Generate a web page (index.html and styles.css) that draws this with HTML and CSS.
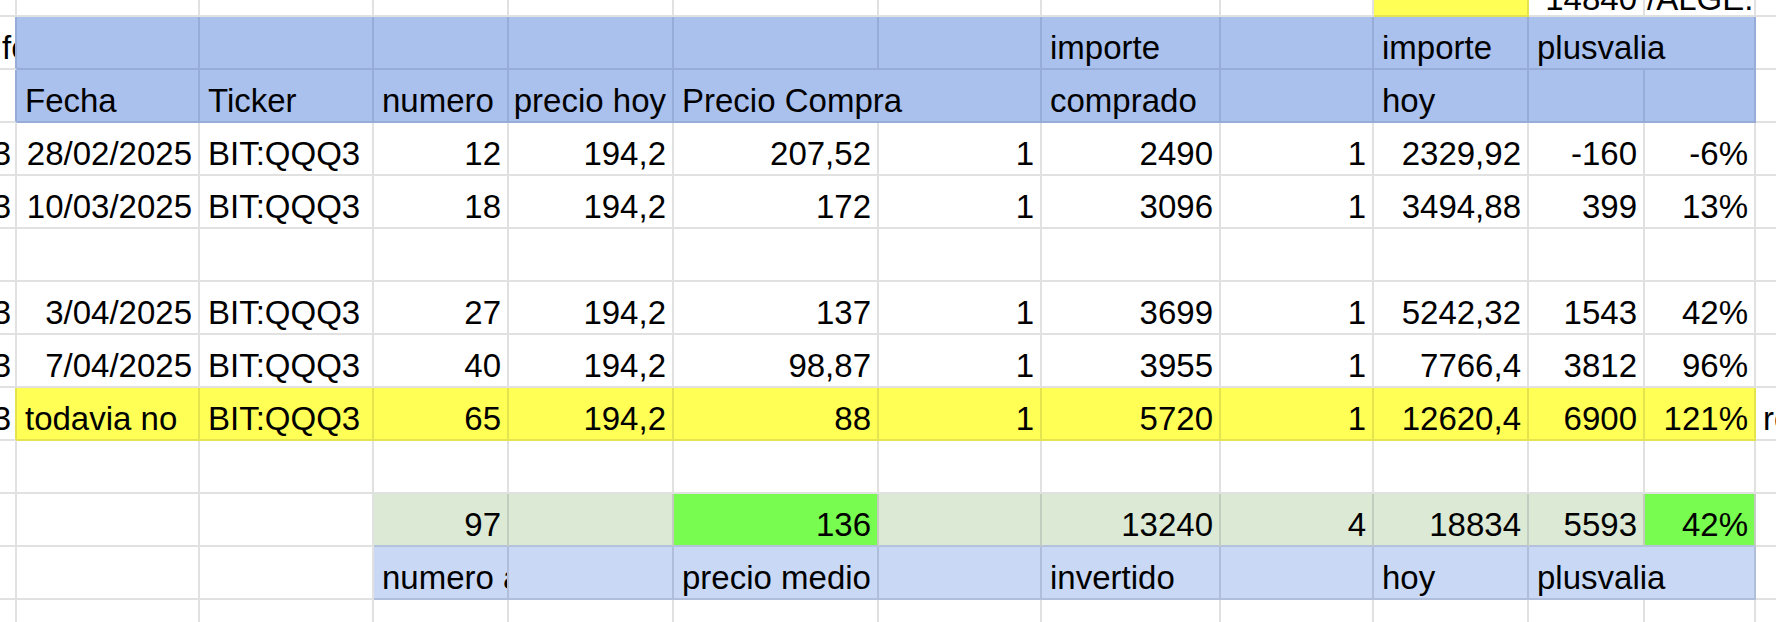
FILE: index.html
```html
<!DOCTYPE html>
<html lang="es">
<head>
<meta charset="utf-8">
<title>Hoja QQQ3</title>
<link rel="stylesheet" href="styles.css">
</head>
<body>
<div class="sheet">
  <!-- top partial row -->
  <div class="c tp"></div>
  <div class="c tp"></div>
  <div class="c tp"></div>
  <div class="c tp"></div>
  <div class="c tp"></div>
  <div class="c tp"></div>
  <div class="c tp"></div>
  <div class="c tp"></div>
  <div class="c tp"></div>
  <div class="c tp ty"></div>
  <div class="c tp r"><span class="lo">14840</span></div>
  <div class="c tp tk"><span class="lo">/ALGE.</span></div>
  <div class="c tp lc"></div>

  <!-- header row 1 -->
  <div class="c z0 h0">fecha</div>
  <div class="c hb"></div>
  <div class="c hb"></div>
  <div class="c hb"></div>
  <div class="c hb"></div>
  <div class="c hb"></div>
  <div class="c hb"></div>
  <div class="c hb">importe</div>
  <div class="c hb"></div>
  <div class="c hb">importe</div>
  <div class="c hb s2">plusvalia</div>
  <div class="c lc"></div>

  <!-- header row 2 -->
  <div class="c z0 h0"></div>
  <div class="c hb">Fecha</div>
  <div class="c hb">Ticker</div>
  <div class="c hb">numero</div>
  <div class="c hb r">precio hoy</div>
  <div class="c hb s2">Precio Compra</div>
  <div class="c hb">comprado</div>
  <div class="c hb"></div>
  <div class="c hb">hoy</div>
  <div class="c hb"></div>
  <div class="c hb"></div>
  <div class="c lc"></div>

  <!-- data 1 -->
  <div class="c r z"><span>QQQ3</span></div>
  <div class="c r">28/02/2025</div>
  <div class="c">BIT:QQQ3</div>
  <div class="c r">12</div>
  <div class="c r">194,2</div>
  <div class="c r">207,52</div>
  <div class="c r">1</div>
  <div class="c r">2490</div>
  <div class="c r">1</div>
  <div class="c r">2329,92</div>
  <div class="c r">-160</div>
  <div class="c r">-6%</div>
  <div class="c lc"></div>

  <!-- data 2 -->
  <div class="c r z"><span>QQQ3</span></div>
  <div class="c r">10/03/2025</div>
  <div class="c">BIT:QQQ3</div>
  <div class="c r">18</div>
  <div class="c r">194,2</div>
  <div class="c r">172</div>
  <div class="c r">1</div>
  <div class="c r">3096</div>
  <div class="c r">1</div>
  <div class="c r">3494,88</div>
  <div class="c r">399</div>
  <div class="c r">13%</div>
  <div class="c lc"></div>

  <!-- empty -->
  <div class="c z"></div>
  <div class="c"></div>
  <div class="c"></div>
  <div class="c"></div>
  <div class="c"></div>
  <div class="c"></div>
  <div class="c"></div>
  <div class="c"></div>
  <div class="c"></div>
  <div class="c"></div>
  <div class="c"></div>
  <div class="c"></div>
  <div class="c lc"></div>

  <!-- data 3 -->
  <div class="c r z"><span>QQQ3</span></div>
  <div class="c r">3/04/2025</div>
  <div class="c">BIT:QQQ3</div>
  <div class="c r">27</div>
  <div class="c r">194,2</div>
  <div class="c r">137</div>
  <div class="c r">1</div>
  <div class="c r">3699</div>
  <div class="c r">1</div>
  <div class="c r">5242,32</div>
  <div class="c r">1543</div>
  <div class="c r">42%</div>
  <div class="c lc"></div>

  <!-- data 4 -->
  <div class="c r z"><span>QQQ3</span></div>
  <div class="c r">7/04/2025</div>
  <div class="c">BIT:QQQ3</div>
  <div class="c r">40</div>
  <div class="c r">194,2</div>
  <div class="c r">98,87</div>
  <div class="c r">1</div>
  <div class="c r">3955</div>
  <div class="c r">1</div>
  <div class="c r">7766,4</div>
  <div class="c r">3812</div>
  <div class="c r">96%</div>
  <div class="c lc"></div>

  <!-- yellow row -->
  <div class="c r z y0"><span>QQQ3</span></div>
  <div class="c y">todavia no</div>
  <div class="c y">BIT:QQQ3</div>
  <div class="c y r">65</div>
  <div class="c y r">194,2</div>
  <div class="c y r">88</div>
  <div class="c y r">1</div>
  <div class="c y r">5720</div>
  <div class="c y r">1</div>
  <div class="c y r">12620,4</div>
  <div class="c y r">6900</div>
  <div class="c y r">121%</div>
  <div class="c lc">resto</div>

  <!-- empty -->
  <div class="c z"></div>
  <div class="c"></div>
  <div class="c"></div>
  <div class="c"></div>
  <div class="c"></div>
  <div class="c"></div>
  <div class="c"></div>
  <div class="c"></div>
  <div class="c"></div>
  <div class="c"></div>
  <div class="c"></div>
  <div class="c"></div>
  <div class="c lc"></div>

  <!-- totals (green) -->
  <div class="c z"></div>
  <div class="c"></div>
  <div class="c"></div>
  <div class="c g r">97</div>
  <div class="c g"></div>
  <div class="c gb r">136</div>
  <div class="c g"></div>
  <div class="c g r">13240</div>
  <div class="c g r">4</div>
  <div class="c g r">18834</div>
  <div class="c g r">5593</div>
  <div class="c gb r">42%</div>
  <div class="c lc"></div>

  <!-- labels (blue) -->
  <div class="c z"></div>
  <div class="c"></div>
  <div class="c"></div>
  <div class="c lb">numero acciones</div>
  <div class="c lb"></div>
  <div class="c lb">precio medio</div>
  <div class="c lb"></div>
  <div class="c lb">invertido</div>
  <div class="c lb"></div>
  <div class="c lb">hoy</div>
  <div class="c lb s2">plusvalia</div>
  <div class="c lc"></div>

  <!-- bottom partial row -->
  <div class="c bt z"></div>
  <div class="c bt"></div>
  <div class="c bt"></div>
  <div class="c bt"></div>
  <div class="c bt"></div>
  <div class="c bt"></div>
  <div class="c bt"></div>
  <div class="c bt"></div>
  <div class="c bt"></div>
  <div class="c bt"></div>
  <div class="c bt"></div>
  <div class="c bt"></div>
  <div class="c bt lc"></div>
</div>
</body>
</html>
```

FILE: styles.css
```css
* {
  box-sizing: border-box;
}

html,
body {
  margin: 0;
  padding: 0;
  background: #ffffff;
  overflow: hidden;
}

body {
  font-family: "Liberation Sans", Arial, sans-serif;
  font-size: 33px;
  color: #000000;
}

.sheet {
  display: grid;
  width: 1776px;
  grid-template-columns: 17px 183px 174px 135px 165px 205px 163px 179px 153px 155px 116px 111px 20px;
  grid-template-rows: 17px repeat(11, 53px) 22px;
}

.c {
  display: flex;
  align-items: flex-end;
  min-width: 0;
  overflow: hidden;
  white-space: nowrap;
  line-height: 33px;
  padding: 0 6px 4px 8px;
  border-right: 2px solid #e1e1e1;
  border-bottom: 2px solid #e1e1e1;
  background: #ffffff;
}

.r {
  justify-content: flex-end;
}

.s2 {
  grid-column: span 2;
}

/* first, partially scrolled column */
.z {
  padding: 0 4px 4px 0;
}

.z0 {
  padding: 0 0 4px 2px;
}

/* last, partially visible column */
.lc {
  border-right: none;
  padding-right: 0;
  padding-left: 7px;
}

/* top partial row */
.tp {
  padding: 0 6px 0 7px;
}

.tp .lo {
  margin-bottom: 0;
}

.tk {
  padding-left: 2px;
  padding-right: 0;
}

.ty {
  background: #ffff55;
  border-right-color: #e4e44e;
  border-bottom-color: #e4e44e;
}

/* header band */
.h0 {
  border-right-color: #98acd8;
}

.hb {
  background: #aac0ed;
  border-right-color: #98acd8;
  border-bottom-color: #98acd8;
}

/* highlighted row */
.y {
  background: #ffff55;
  border-right-color: #e4e44e;
  border-bottom-color: #e4e44e;
}

.y0 {
  border-right-color: #e4e44e;
}

/* totals */
.g {
  background: #dce9d5;
  border-right-color: #c2cdbf;
  border-bottom-color: #b4c2dc;
}

.gb {
  background: #77fc4f;
  border-right-color: #c2cdbf;
  border-bottom-color: #b4c2dc;
}

/* label row */
.lb {
  background: #c9d9f5;
  border-right-color: #b0bedb;
  border-bottom-color: #b0bedb;
}

/* bottom partial row */
.bt {
  border-bottom: none;
}
```
